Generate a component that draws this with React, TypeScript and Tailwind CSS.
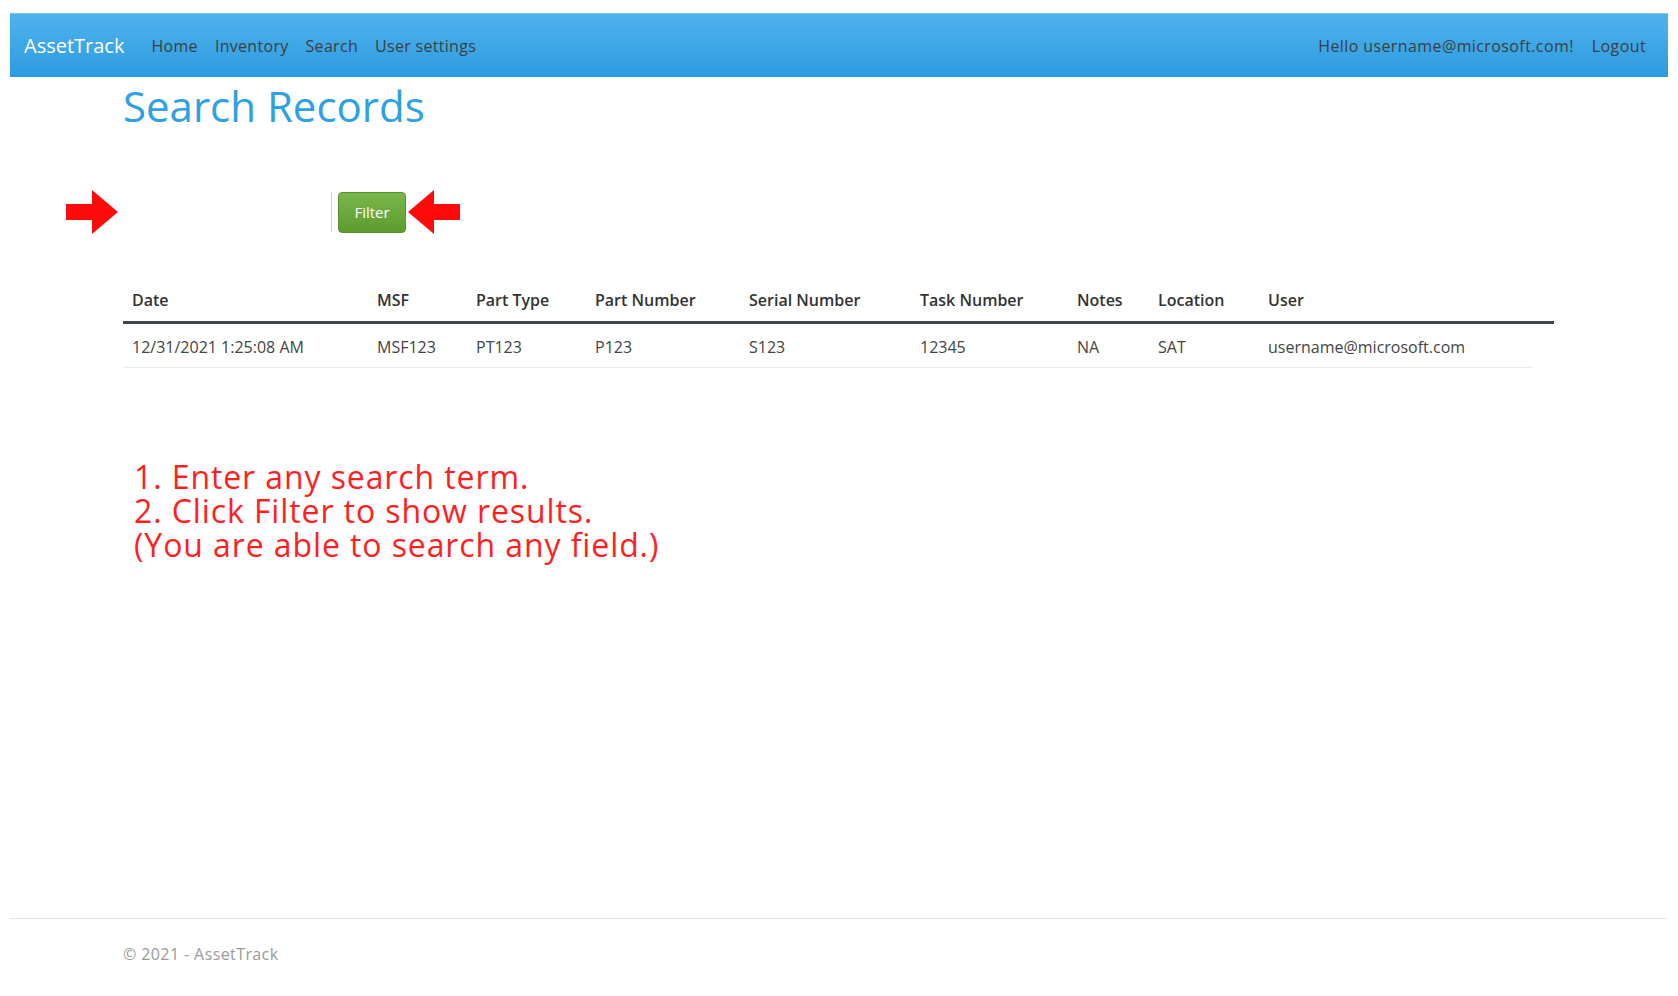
import React from "react";

const columns = [
  { label: "Date", width: "w-[245px]" },
  { label: "MSF", width: "w-[99px]" },
  { label: "Part Type", width: "w-[119px]" },
  { label: "Part Number", width: "w-[154px]" },
  { label: "Serial Number", width: "w-[171px]" },
  { label: "Task Number", width: "w-[157px]" },
  { label: "Notes", width: "w-[81px]" },
  { label: "Location", width: "w-[110px]" },
  { label: "User", width: "w-[295px]" },
];

const records = [
  ["12/31/2021 1:25:08 AM", "MSF123", "PT123", "P123", "S123", "12345", "NA", "SAT", "username@microsoft.com"],
];

function Arrow({ flip }: { flip?: boolean }) {
  return (
    <svg width="52" height="44" viewBox="0 0 52 44" className={flip ? "-scale-x-100" : ""}>
      <polygon points="0,14 26,14 26,0 52,22 26,44 26,30 0,30" fill="#ff0a0a" />
    </svg>
  );
}

export default function App() {
  return (
    <div
      className="min-h-screen flex flex-col bg-white px-[10px] pt-[13px]"
      style={{ fontFamily: '"Open Sans", "Noto Sans", sans-serif' }}
    >
      {/* Navbar */}
      <nav className="h-[64px] flex items-center justify-between pl-[14px] pr-[22px] bg-gradient-to-b from-[#4fb2ed] to-[#2b9be0] border-t border-[#7cc6f2]">
        <div className="flex items-center">
          <span className="text-[20px] text-white mr-[27px]">AssetTrack</span>
          <div className="flex items-center gap-[17px] text-[16px] tracking-[0.3px] text-[#3a3f44]">
            <a>Home</a>
            <a>Inventory</a>
            <a>Search</a>
            <a>User settings</a>
          </div>
        </div>
        <div className="flex items-center gap-[18px] text-[16px] tracking-[0.4px] text-[#3a3f44]">
          <span>Hello username@microsoft.com!</span>
          <a>Logout</a>
        </div>
      </nav>

      {/* Main */}
      <main className="pl-[113px] pr-[102px]">
        <h1 className="mt-[4px] text-[42px] leading-[50px] text-[#2ea0e4]">Search Records</h1>

        <div className="mt-[59px] flex items-center -ml-[57px]">
          <Arrow />
          <input
            className="ml-[4px] w-[210px] h-[40px] border-r border-[#cfcfcf] outline-none bg-transparent"
            aria-label="Search term"
          />
          <button className="ml-[6px] w-[68px] h-[41px] rounded-[4px] border border-[#5a9230] bg-gradient-to-b from-[#7bb84b] to-[#5c9b2e] text-white text-[15px]">
            Filter
          </button>
          <div className="ml-[2px]">
            <Arrow flip />
          </div>
        </div>

        <table className="mt-[45px] w-[1431px] table-fixed border-collapse">
          <thead>
            <tr className="border-b-[3px] border-[#3f454b]">
              {columns.map((c) => (
                <th
                  key={c.label}
                  className={`${c.width} h-[43px] px-[9px] text-left text-[16px] font-semibold text-[#333]`}
                >
                  {c.label}
                </th>
              ))}
            </tr>
          </thead>
          <tbody>
            {records.map((r, i) => (
              <tr key={i}>
                {r.map((cell, j) => (
                  <td key={j} className="h-[45px] pt-[4px] px-[9px] text-[16px] text-[#444] whitespace-nowrap">
                    {cell}
                  </td>
                ))}
              </tr>
            ))}
          </tbody>
        </table>
        <div className="w-[1410px] h-px bg-[#ececec]" />

        <div className="mt-[92px] ml-[11px] text-[32px] leading-[34px] tracking-[0.9px] text-[#ff1f1f]">
          <p>1. Enter any search term.</p>
          <p>2. Click Filter to show results.</p>
          <p>(You are able to search any field.)</p>
        </div>
      </main>

      {/* Footer */}
      <footer className="mt-auto border-t border-[#e3e6ea] pt-[23px] pb-[30px] pl-[113px] text-[16px] leading-[24px] tracking-[0.4px] text-[#9a9a9a]">
        © 2021 - AssetTrack
      </footer>
    </div>
  );
}
